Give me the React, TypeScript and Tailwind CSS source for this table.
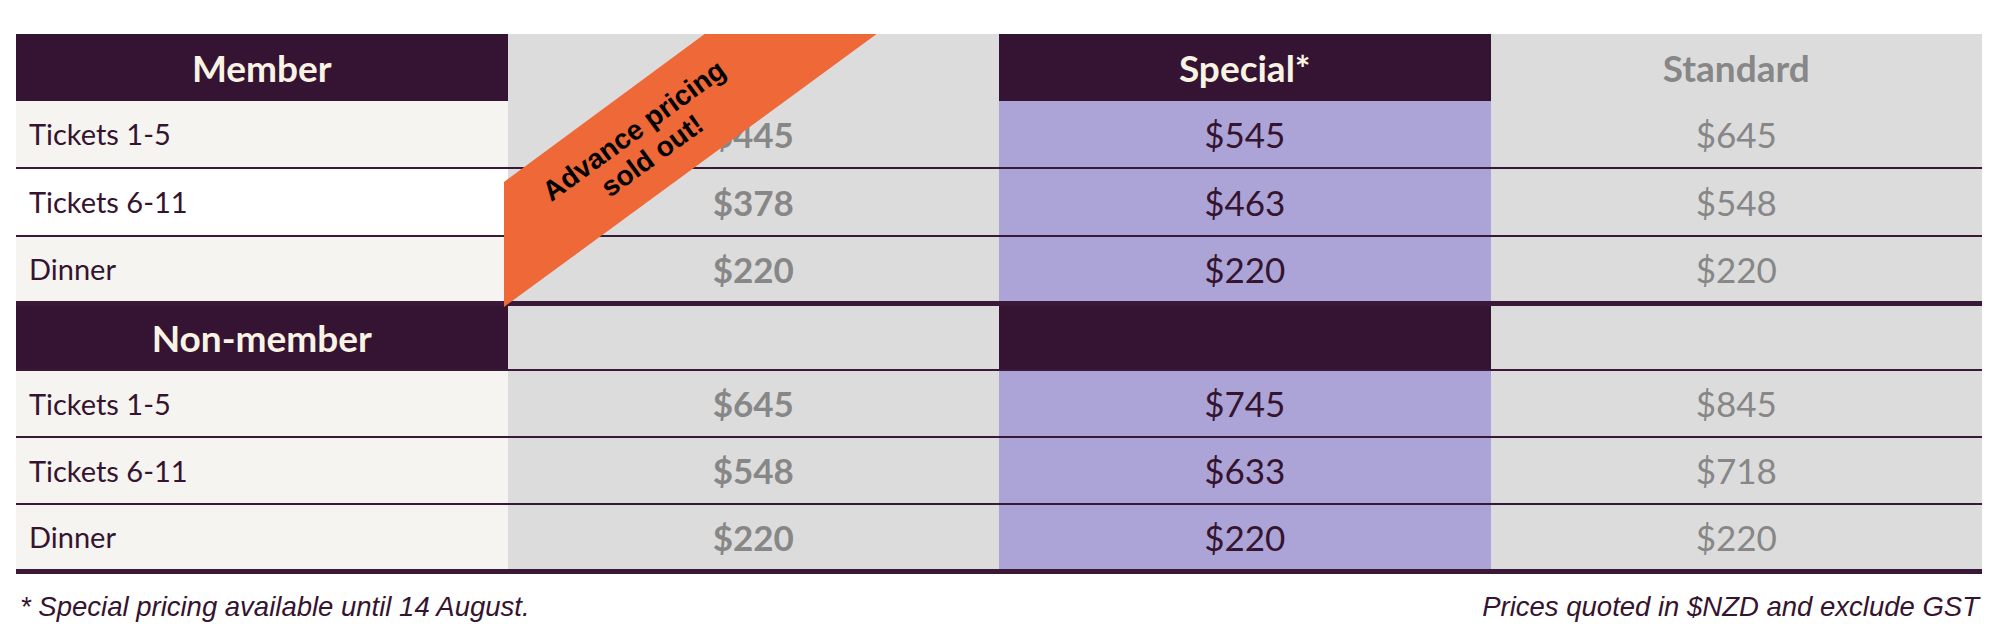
import React from 'react'

const rows = {
  member: [
    { label: 'Tickets 1-5', adv: '$445', special: '$545', standard: '$645', bg: 'bg-[#f5f4f0]' },
    { label: 'Tickets 6-11', adv: '$378', special: '$463', standard: '$548', bg: 'bg-white' },
    { label: 'Dinner', adv: '$220', special: '$220', standard: '$220', bg: 'bg-[#f5f4f0]' },
  ],
  nonMember: [
    { label: 'Tickets 1-5', adv: '$645', special: '$745', standard: '$845', bg: 'bg-[#f5f4f0]' },
    { label: 'Tickets 6-11', adv: '$548', special: '$633', standard: '$718', bg: 'bg-[#f5f4f0]' },
    { label: 'Dinner', adv: '$220', special: '$220', standard: '$220', bg: 'bg-[#f5f4f0]' },
  ],
}

type Row = (typeof rows.member)[number]

const PriceRow = ({ row, last, height }: { row: Row; last?: boolean; height: string }) => (
  <div className={`grid grid-cols-4 border-b-[#3a1837] ${last ? 'border-b-[5px] h-[69px]' : `border-b-2 ${height}`}`}>
    <div className={`${row.bg} flex items-center pl-[13px] text-[29px] text-[#35142f]`}>{row.label}</div>
    <div className="bg-[#dcdcdc] flex items-center justify-center text-[35px] font-bold text-[#878787]">{row.adv}</div>
    <div className="bg-[#aca4d7] flex items-center justify-center text-[35px] text-[#35142f]">{row.special}</div>
    <div className="bg-[#dcdcdc] flex items-center justify-center text-[35px] text-[#878787]">{row.standard}</div>
  </div>
)

export default function App() {
  return (
    <div className="w-[2000px] h-[638px] bg-white pt-[34px] font-['Lato',sans-serif]">
      <div className="relative ml-[16px] w-[1966px]">
        {/* Member header */}
        <div className="grid grid-cols-4 h-[67px]">
          <div className="bg-[#351433] flex items-center justify-center text-[37px] font-bold text-[#f9f3e3]">Member</div>
          <div className="bg-[#dcdcdc]" />
          <div className="bg-[#351433] flex items-center justify-center text-[37px] font-bold text-[#f9f3e3]">Special*</div>
          <div className="bg-[#dcdcdc] flex items-center justify-center text-[37px] font-bold text-[#878787]">Standard</div>
        </div>
        {rows.member.map((r, i) => (
          <PriceRow key={r.label} row={r} height="h-[68px]" last={i === rows.member.length - 1} />
        ))}

        {/* Non-member header */}
        <div className="grid grid-cols-4 h-[65px] border-b-2 border-b-[#3a1837]">
          <div className="bg-[#351433] flex items-center justify-center text-[37px] font-bold text-[#f9f3e3]">Non-member</div>
          <div className="bg-[#dcdcdc]" />
          <div className="bg-[#351433]" />
          <div className="bg-[#dcdcdc]" />
        </div>
        {rows.nonMember.map((r, i) => (
          <PriceRow key={r.label + i} row={r} height="h-[67px]" last={i === rows.nonMember.length - 1} />
        ))}

        {/* sold out ribbon */}
        <svg className="absolute left-0 top-0" width="900" height="280" viewBox="0 0 900 280">
          <polygon points="690,-1 862,-1 488,273 488,148" fill="#ee6838" />
        </svg>
        <div className="absolute left-[627px] top-[109px] -translate-x-1/2 -translate-y-1/2 -rotate-[36deg] text-center font-['Liberation_Sans',Arial,sans-serif] font-bold text-[28px] leading-[31px] text-black whitespace-nowrap">
          Advance pricing
          <br />
          sold out!
        </div>
      </div>

      <div className="flex justify-between pl-[20px] pr-[21px] pt-[12px] font-['Liberation_Sans',Arial,sans-serif] italic text-[27.5px] text-[#35142f]">
        <span>* Special pricing available until 14 August.</span>
        <span>Prices quoted in $NZD and exclude GST</span>
      </div>
    </div>
  )
}
